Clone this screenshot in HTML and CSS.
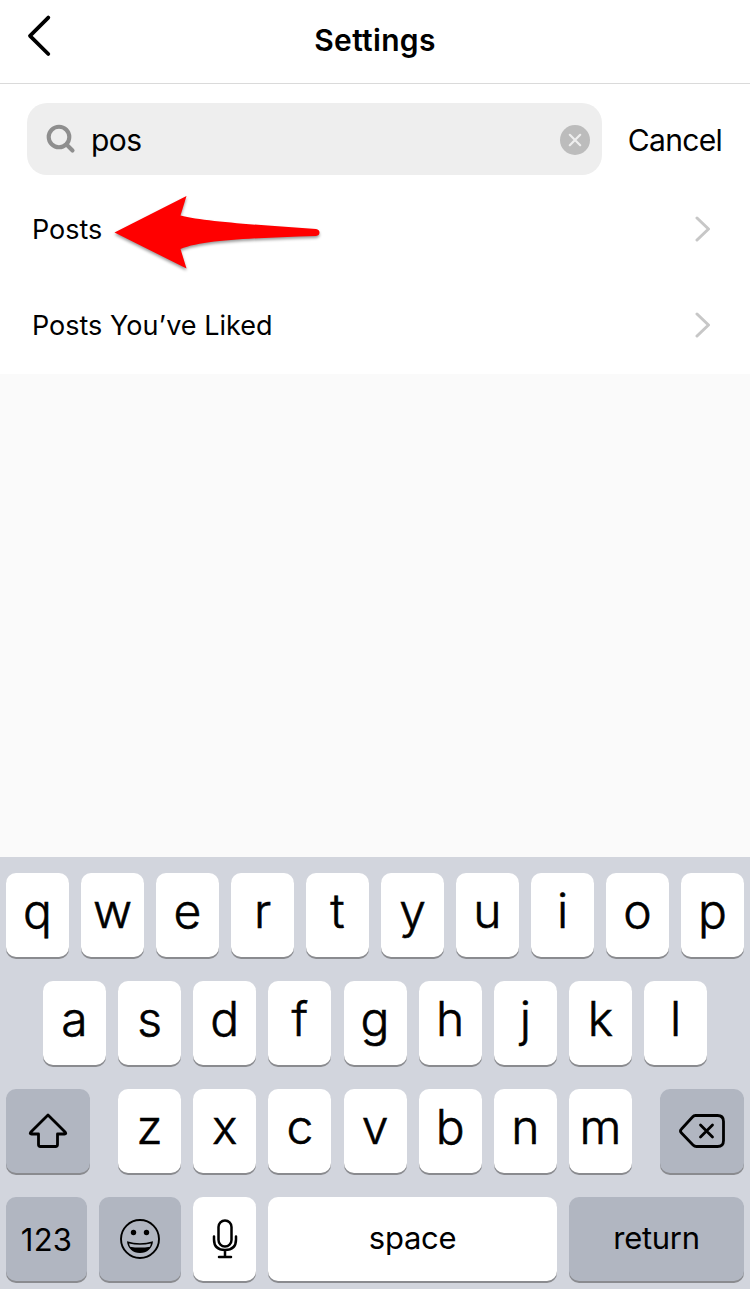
FILE: index.html
```
<!DOCTYPE html>
<html lang="en">
<head>
    <meta charset="UTF-8">
    <meta name="viewport" content="width=device-width, initial-scale=1.0">
    <title>Settings</title>
    <link rel="stylesheet" href="styles.css">
</head>
<body>
    <header class="header">
        <svg class="back" width="26" height="44" viewBox="0 0 26 44"><path d="M22.3 3.6 4 21.8 22.3 40"/></svg>
        <h1 class="title">Settings</h1>
    </header>

    <div class="search">
        <div class="search-box">
            <svg class="search-icon" width="30" height="30" viewBox="0 0 30 30"><circle cx="13" cy="13" r="10.3"/><path d="M20.5 20.5 26.5 26.5"/></svg>
            <span class="query">pos</span>
            <svg class="clear" width="30" height="30" viewBox="0 0 30 30"><circle cx="15" cy="15" r="15"/><path d="M9.8 9.8l10.4 10.4M20.2 9.8 9.8 20.2"/></svg>
        </div>
        <span class="cancel">Cancel</span>
    </div>

    <ul class="results">
        <li class="result">
            <span>Posts</span>
            <svg class="chevron" width="16" height="26" viewBox="0 0 16 26"><path d="M2 2l11.5 11L2 24"/></svg>
            <svg class="arrow" width="210" height="80" viewBox="0 0 210 80"><path d="M1.5 37.5 73.5 1 67.5 20.5C92 27 150 30 203 34Q206.5 34.5 206.5 37.5Q206.5 40.5 203 41C150 43 92 44 67.5 54L73.5 73.5Z"/></svg>
        </li>
        <li class="result">
            <span>Posts You’ve Liked</span>
            <svg class="chevron" width="16" height="26" viewBox="0 0 16 26"><path d="M2 2l11.5 11L2 24"/></svg>
        </li>
    </ul>

    <div class="keyboard">
        <div class="row">
            <div class="key">q</div>
            <div class="key">w</div>
            <div class="key">e</div>
            <div class="key">r</div>
            <div class="key">t</div>
            <div class="key">y</div>
            <div class="key">u</div>
            <div class="key">i</div>
            <div class="key">o</div>
            <div class="key">p</div>
        </div>
        <div class="row row-middle">
            <div class="key">a</div>
            <div class="key">s</div>
            <div class="key">d</div>
            <div class="key">f</div>
            <div class="key">g</div>
            <div class="key">h</div>
            <div class="key">j</div>
            <div class="key">k</div>
            <div class="key">l</div>
        </div>
        <div class="row">
            <div class="key key-dark key-shift">
                <svg width="42" height="36" viewBox="0 0 42 36"><path d="M21 2 38.3 19.2Q39.6 21 37.5 21H30.5V31.5Q30.5 33.5 28.5 33.5H13.5Q11.5 33.5 11.5 31.5V21H4.5Q2.4 21 3.7 19.2Z"/></svg>
            </div>
            <div class="letters">
                <div class="key">z</div>
                <div class="key">x</div>
                <div class="key">c</div>
                <div class="key">v</div>
                <div class="key">b</div>
                <div class="key">n</div>
                <div class="key">m</div>
            </div>
            <div class="key key-dark key-delete">
                <svg width="48" height="36" viewBox="0 0 48 36"><path d="M17.5 2.5H39.5Q45.5 2.5 45.5 8.5V27.5Q45.5 33.5 39.5 33.5H18.5Q16.5 33.5 15 32L3.5 20Q1.5 18 3.5 16L14.5 4Q15.8 2.5 17.5 2.5Z"/><path d="M22.5 12 34.5 24M34.5 12 22.5 24"/></svg>
            </div>
        </div>
        <div class="row">
            <div class="key key-dark key-text key-numbers">123</div>
            <div class="key key-dark key-emoji">
                <svg width="40" height="40" viewBox="0 0 40 40">
                    <circle cx="20" cy="20" r="19"/>
                    <circle class="fill" cx="13.5" cy="13.5" r="2.7"/>
                    <circle class="fill" cx="26.5" cy="13.5" r="2.7"/>
                    <path class="fill" d="M7 22.3Q20 26 33 22.3C32.5 29.5 27 34 20 34S7.5 29.5 7 22.3Z"/>
                    <path class="teeth" d="M9 24.4Q20 27.2 31 24.4L30 27.7Q20 29.5 10 27.7Z"/>
                </svg>
            </div>
            <div class="key key-mic">
                <svg width="26" height="40" viewBox="0 0 26 40"><rect x="6.5" y="1.5" width="13" height="26" rx="6.5"/><path d="M2 17.5V20.5Q2 31 13 31T24 20.5V17.5M13 31V38M7 38H19"/></svg>
            </div>
            <div class="key key-text key-space">space</div>
            <div class="key key-dark key-text key-return">return</div>
        </div>
    </div>
</body>
</html>
```
FILE: styles.css
```
* {
    box-sizing: border-box;
}

body {
    margin: 0;
    width: 750px;
    height: 1289px;
    display: flex;
    flex-direction: column;
    overflow: hidden;
    background: #fafafa;
    color: #000;
    font-family: "Inter", "Liberation Sans", sans-serif;
}

svg {
    display: block;
    flex-shrink: 0;
    fill: none;
    stroke: #000;
    stroke-linecap: round;
    stroke-linejoin: round;
}

/* Header */
.header {
    height: 84px;
    display: grid;
    grid-template-columns: 1fr auto 1fr;
    background: #fff;
    border-bottom: 1px solid #dadada;
}

.back {
    margin: 14px 0 0 26px;
    stroke-width: 3.8;
}

.title {
    margin: 22px 0 0;
    font-size: 30px;
    line-height: 36px;
    font-weight: 600;
    letter-spacing: 0.3px;
}

/* Search */
.search {
    height: 99px;
    padding: 19px 28px 0 27px;
    display: flex;
    justify-content: space-between;
    background: #fff;
}

.search-box {
    width: 575px;
    height: 72px;
    padding: 2px 12px 0 19px;
    display: flex;
    align-items: center;
    background: #eee;
    border-radius: 20px;
}

.search-icon {
    margin-bottom: 2px;
    stroke: #8e8e8e;
    stroke-width: 4.1;
}

.query {
    flex: 1;
    margin-left: 15px;
    font-size: 30px;
    letter-spacing: -0.6px;
}

.clear {
    stroke: #eee;
    stroke-width: 2.2;
}

.clear circle {
    fill: #bcbcbc;
    stroke: none;
}

.cancel {
    font-size: 30px;
    line-height: 74px;
    letter-spacing: -0.7px;
}

/* Results */
.results {
    margin: 0;
    padding: 0 39px 0 32px;
    height: 191px;
    list-style: none;
    background: #fff;
}

.result {
    position: relative;
    height: 96px;
    padding-bottom: 4px;
    display: flex;
    align-items: center;
    justify-content: space-between;
    font-size: 27px;
}

.chevron {
    stroke: #c7c7c7;
    stroke-width: 3;
}

/* Arrow pointing at the first result */
.arrow {
    position: absolute;
    left: 81px;
    top: 12px;
    fill: #f00;
    stroke: none;
    filter: drop-shadow(0 2px 1.5px rgba(0, 0, 0, 0.4));
}

/* Keyboard */
.keyboard {
    height: 432px;
    margin-top: auto;
    padding: 16px 6px 0;
    display: flex;
    flex-direction: column;
    gap: 24px;
    background: #d2d5dd;
}

.row {
    display: flex;
    justify-content: space-between;
}

.row-middle {
    padding: 0 37px;
}

.letters {
    width: 514px;
    padding-left: 0.1px;
    display: flex;
    justify-content: space-between;
}

.key {
    width: 63px;
    height: 84px;
    padding-bottom: 9px;
    display: flex;
    align-items: center;
    justify-content: center;
    background: #fff;
    border-radius: 10px;
    box-shadow: 0 2px 0 #8a8b8f;
    font-size: 48px;
    font-weight: 300;
    -webkit-text-stroke: 0.6px #000;
}

.key-dark {
    background: #b1b6c1;
}

.key-text {
    padding-bottom: 4px;
    font-size: 31px;
    font-weight: 400;
    letter-spacing: -0.3px;
    -webkit-text-stroke: 0;
}

.key-shift,
.key-delete {
    width: 84px;
    padding-bottom: 0;
}

.key-shift svg,
.key-delete svg {
    stroke-width: 2.8;
}

.key-numbers {
    width: 81px;
    padding-bottom: 0;
    letter-spacing: 0.2px;
}

.key-emoji {
    width: 82px;
    padding-bottom: 0;
}

.key-emoji svg {
    stroke-width: 1.9;
}

.key-emoji .fill {
    fill: #000;
    stroke: none;
}

.key-emoji .teeth {
    fill: #b1b6c1;
    stroke: none;
}

.key-mic {
    padding-bottom: 0;
}

.key-mic svg {
    stroke-width: 2.5;
}

.key-space {
    width: 289px;
}

.key-return {
    width: 175px;
}
```
